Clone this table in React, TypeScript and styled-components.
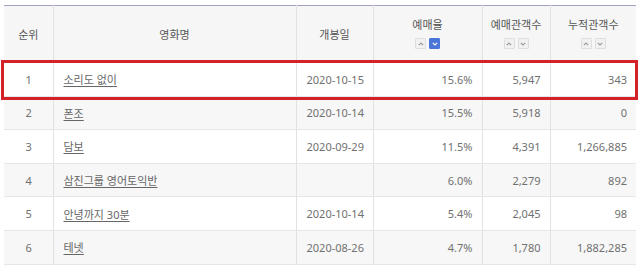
import React from "react";
import styled, { createGlobalStyle } from "styled-components";

const GlobalStyle = createGlobalStyle`
  html, body {
    margin: 0;
    padding: 0;
    background: #ffffff;
    font-family: "Noto Sans", "Noto Sans CJK KR", sans-serif;
  }
`;

type Movie = {
  rank: number;
  title: string;
  date: string;
  rate: string;
  reserve: string;
  total: string;
};

const movies: Movie[] = [
  { rank: 1, title: "소리도 없이", date: "2020-10-15", rate: "15.6%", reserve: "5,947", total: "343" },
  { rank: 2, title: "폰조", date: "2020-10-14", rate: "15.5%", reserve: "5,918", total: "0" },
  { rank: 3, title: "담보", date: "2020-09-29", rate: "11.5%", reserve: "4,391", total: "1,266,885" },
  { rank: 4, title: "삼진그룹 영어토익반", date: "", rate: "6.0%", reserve: "2,279", total: "892" },
  { rank: 5, title: "안녕까지 30분", date: "2020-10-14", rate: "5.4%", reserve: "2,045", total: "98" },
  { rank: 6, title: "테넷", date: "2020-08-26", rate: "4.7%", reserve: "1,780", total: "1,882,285" },
];

const Page = styled.div`
  position: relative;
  padding: 5px 4px 0 4px;
  width: 632px;
  height: 263px;
  overflow: hidden;
`;

const Table = styled.table`
  width: 632px;
  border-collapse: collapse;
  table-layout: fixed;
  border-top: 1px solid #9ea3c2;
`;

const Th = styled.th`
  background: #f6f6f6;
  height: 55px;
  padding: 0;
  font-size: 11px;
  font-weight: 400;
  color: #555;
  text-align: center;
  vertical-align: middle;
  border-left: 1px solid #e2e2e2;
  border-bottom: 2px solid #a8a8a8;
  &:first-child {
    border-left: none;
  }
`;

const HeadLabel = styled.div`
  line-height: 14px;
`;

const SortRow = styled.div`
  display: flex;
  justify-content: center;
  gap: 3px;
  margin-top: 6px;
`;

const SortBtn = styled.span<{ $active?: boolean }>`
  width: 11px;
  height: 11px;
  box-sizing: border-box;
  display: flex;
  align-items: center;
  justify-content: center;
  background: ${(p) => (p.$active ? "#4a76d8" : "#f1f1f1")};
  border: 1px solid ${(p) => (p.$active ? "#4a76d8" : "#dedede")};
  border-radius: 1px;
`;

const Tr = styled.tr<{ $alt?: boolean }>`
  background: ${(p) => (p.$alt ? "#f7f7f7" : "#ffffff")};
`;

const Td = styled.td<{ $align?: "left" | "center" | "right" }>`
  height: 32.6px;
  padding: 0 9px 0 10px;
  font-size: 11px;
  color: #707070;
  text-align: ${(p) => p.$align || "center"};
  vertical-align: middle;
  border-left: 1px solid #e2e2e2;
  border-bottom: 1px solid #e6e6e6;
  white-space: nowrap;
  &:first-child {
    border-left: none;
  }
`;

const Title = styled.a`
  color: #666;
  text-decoration: underline;
  text-underline-offset: 2px;
`;

const Highlight = styled.div`
  position: absolute;
  left: 1px;
  top: 60px;
  width: 637px;
  height: 40px;
  box-sizing: border-box;
  border: 3px solid #d3222a;
  pointer-events: none;
`;

const Chevron = ({ up, color }: { up?: boolean; color: string }) => (
  <svg width="6" height="4" viewBox="0 0 6 4">
    <path
      d={up ? "M0.8 3.2 L3 1 L5.2 3.2" : "M0.8 0.8 L3 3 L5.2 0.8"}
      fill="none"
      stroke={color}
      strokeWidth="1.1"
    />
  </svg>
);

const Sort = ({ active }: { active?: boolean }) => (
  <SortRow>
    <SortBtn>
      <Chevron up color="#9a9a9a" />
    </SortBtn>
    <SortBtn $active={active}>
      <Chevron color={active ? "#ffffff" : "#9a9a9a"} />
    </SortBtn>
  </SortRow>
);

const App = () => {
  return (
    <>
      <GlobalStyle />
      <Page>
        <Table>
          <colgroup>
            <col style={{ width: 49 }} />
            <col style={{ width: 243 }} />
            <col style={{ width: 77 }} />
            <col style={{ width: 109 }} />
            <col style={{ width: 68 }} />
            <col style={{ width: 86 }} />
          </colgroup>
          <thead>
            <tr>
              <Th>순위</Th>
              <Th>영화명</Th>
              <Th>개봉일</Th>
              <Th>
                <HeadLabel>예매율</HeadLabel>
                <Sort active />
              </Th>
              <Th>
                <HeadLabel>예매관객수</HeadLabel>
                <Sort />
              </Th>
              <Th>
                <HeadLabel>누적관객수</HeadLabel>
                <Sort />
              </Th>
            </tr>
          </thead>
          <tbody>
            {movies.map((m, i) => (
              <Tr key={m.rank} $alt={i % 2 === 1}>
                <Td>{m.rank}</Td>
                <Td $align="left">
                  <Title>{m.title}</Title>
                </Td>
                <Td>{m.date}</Td>
                <Td $align="right">{m.rate}</Td>
                <Td $align="right">{m.reserve}</Td>
                <Td $align="right">{m.total}</Td>
              </Tr>
            ))}
          </tbody>
        </Table>
        <Highlight />
      </Page>
    </>
  );
};

export default App;
